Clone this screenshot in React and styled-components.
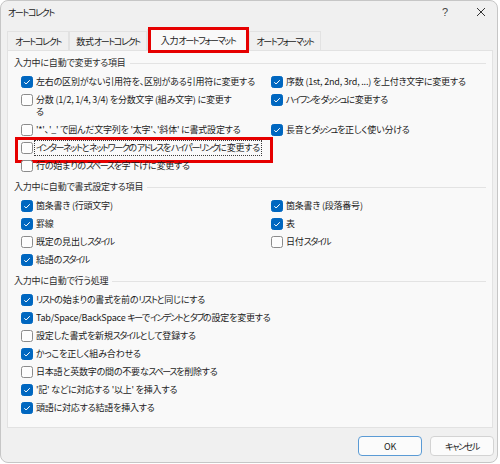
import React from "react";
import styled, { createGlobalStyle } from "styled-components";

const GlobalStyle = createGlobalStyle`
  * { box-sizing: border-box; }
  body {
    margin: 0;
    background: #ffffff;
    font-family: "Noto Sans CJK JP", sans-serif;
  }
`;

const Window = styled.div`
  width: 498px;
  height: 463px;
  border: 1px solid #c6c6c6;
  border-radius: 8px;
  background: #f0f0f0;
  display: flex;
  flex-direction: column;
  overflow: hidden;
  color: #1b1b1b;
  font-size: 9px;
  font-feature-settings: "palt";
  letter-spacing: -0.2px;
`;

// katakana in Yu Gothic UI is far narrower than in Noto, so tighten those runs
const Kana = styled.span`
  letter-spacing: -1.4px;
`;

const TitleBar = styled.div`
  height: 27px;
  padding: 0 11px 5px 7px;
  display: flex;
  align-items: center;
`;

const Title = styled.div`
  flex: 1;
`;

const Controls = styled.div`
  display: flex;
  align-items: center;
  gap: 28px;
  color: #444;
`;

const Help = styled.span`
  font-family: "Liberation Sans", sans-serif;
  font-size: 11px;
  letter-spacing: 0;
`;

const TabRow = styled.div`
  height: 22px;
  padding-left: 6px;
  display: flex;
  align-items: flex-end;
`;

const Tab = styled.div`
  position: relative;
  width: ${({ $w }) => $w}px;
  height: ${({ $active }) => ($active ? 22 : 19)}px;
  display: flex;
  align-items: center;
  justify-content: center;
  white-space: nowrap;
  background: ${({ $active }) => ($active ? "#f9f9f9" : "#f0f0f0")};
  border: 1px solid #e2e2e2;
  border-bottom: none;
  margin-bottom: ${({ $active }) => ($active ? -1 : 0)}px;
  z-index: ${({ $active }) => ($active ? 1 : 0)};

  ${({ $highlight }) =>
    $highlight &&
    `
    &::after {
      content: "";
      position: absolute;
      top: -3px;
      left: 0;
      right: -1px;
      bottom: -2px;
      border: 3px solid #e60000;
      pointer-events: none;
    }
  `}
`;

const Panel = styled.div`
  height: 378px;
  margin: 0 4px 0 6px;
  padding: 5px 6px 0 6px;
  border: 1px solid #e2e2e2;
  background: #f9f9f9;
`;

const Section = styled.div`
  & + & {
    margin-top: 5px;
  }
`;

const SectionHeader = styled.div`
  display: flex;
  align-items: center;
  white-space: nowrap;
  line-height: 14px;
  height: 14px;
  color: #2b2b2b;

  &::after {
    content: "";
    flex: 1;
    height: 1px;
    margin-left: 4px;
    background: #e3e3e3;
  }
`;

const Grid = styled.div`
  margin-top: 3px;
  padding-left: 7px;
  display: grid;
  grid-template-columns: ${({ $cols }) => ($cols === 2 ? "250px 1fr" : "1fr")};
`;

const Row = styled.div`
  position: relative;
  display: flex;
  align-items: flex-start;
  gap: 3px;
  padding: 3px 0;
  line-height: 12px;

  ${({ $highlight }) =>
    $highlight &&
    `
    &::before {
      content: "";
      position: absolute;
      top: -2px;
      left: -6px;
      width: 252px;
      height: 20px;
      border: 3px solid #e60000;
      pointer-events: none;
    }
  `}
`;

const Box = styled.span`
  flex: none;
  width: 12px;
  height: 12px;
  border-radius: 2.5px;
  display: flex;
  align-items: center;
  justify-content: center;
  background: ${({ $checked }) => ($checked ? "#0067c0" : "#fdfdfd")};
  border: 1px solid ${({ $checked }) => ($checked ? "#0067c0" : "#8b8b8b")};
`;

const Label = styled.span`
  white-space: nowrap;
  ${({ $focus }) =>
    $focus &&
    `
    outline: 1px dotted #3a3a3a;
    outline-offset: 1px;
  `}
`;

const Footer = styled.div`
  display: flex;
  justify-content: flex-end;
  gap: 8px;
  padding: 8px 3px 0 0;
`;

const Button = styled.button`
  width: 64px;
  height: 20px;
  padding: 0;
  font: inherit;
  letter-spacing: inherit;
  font-feature-settings: inherit;
  color: #1b1b1b;
  background: #fbfbfb;
  border: 1px solid ${({ $primary }) => ($primary ? "#5b9bd5" : "#d3d3d3")};
  border-radius: 4px;
`;

const Text = ({ children }) =>
  children
    .split(/([\u30A0-\u30FF]+)/)
    .map((part, i) => (i % 2 ? <Kana key={i}>{part}</Kana> : part));

const CloseIcon = () => (
  <svg width="10" height="10" viewBox="0 0 10 10">
    <path d="M1 1 L9 9 M9 1 L1 9" stroke="#333" strokeWidth="1" fill="none" />
  </svg>
);

const Check = ({ checked }) => (
  <Box $checked={checked}>
    {checked && (
      <svg width="8" height="8" viewBox="0 0 8 8">
        <path d="M1.3 4.2 L3.1 6 L6.8 2.2" stroke="#fff" strokeWidth="1" fill="none" />
      </svg>
    )}
  </Box>
);

const Option = ({ item }) => (
  <Row $highlight={item.highlight}>
    <Check checked={item.checked} />
    <Label $focus={item.highlight}>
      {item.text.split("\n").map((line, i) => (
        <React.Fragment key={i}>
          {i > 0 && <br />}
          <Text>{line}</Text>
        </React.Fragment>
      ))}
    </Label>
  </Row>
);

const tabs = [
  { name: "オートコレクト", w: 62 },
  { name: "数式オートコレクト", w: 78 },
  { name: "入力オートフォーマット", w: 102, active: true },
  { name: "オートフォーマット", w: 72 },
];

const sections = [
  {
    title: "入力中に自動で変更する項目",
    cols: 2,
    items: [
      { text: "左右の区別がない引用符を、区別がある引用符に変更する", checked: true },
      { text: "序数 (1st, 2nd, 3rd, ...) を上付き文字に変更する", checked: true },
      { text: "分数 (1/2, 1/4, 3/4) を分数文字 (組み文字) に変更す\nる" },
      { text: "ハイフンをダッシュに変更する", checked: true },
      { text: "'*'、'_' で囲んだ文字列を '太字'、'斜体' に書式設定する" },
      { text: "長音とダッシュを正しく使い分ける", checked: true },
      { text: "インターネットとネットワークのアドレスをハイパーリンクに変更する", highlight: true },
      null,
      { text: "行の始まりのスペースを字下げに変更する" },
    ],
  },
  {
    title: "入力中に自動で書式設定する項目",
    cols: 2,
    items: [
      { text: "箇条書き (行頭文字)", checked: true },
      { text: "箇条書き (段落番号)", checked: true },
      { text: "罫線", checked: true },
      { text: "表", checked: true },
      { text: "既定の見出しスタイル" },
      { text: "日付スタイル" },
      { text: "結語のスタイル", checked: true },
    ],
  },
  {
    title: "入力中に自動で行う処理",
    cols: 1,
    items: [
      { text: "リストの始まりの書式を前のリストと同じにする", checked: true },
      { text: "Tab/Space/BackSpace キーでインデントとタブの設定を変更する", checked: true },
      { text: "設定した書式を新規スタイルとして登録する" },
      { text: "かっこを正しく組み合わせる", checked: true },
      { text: "日本語と英数字の間の不要なスペースを削除する" },
      { text: "'記' などに対応する '以上' を挿入する", checked: true },
      { text: "頭語に対応する結語を挿入する", checked: true },
    ],
  },
];

const App = () => {
  return (
    <>
      <GlobalStyle />
      <Window>
        <TitleBar>
          <Title>
            <Text>オートコレクト</Text>
          </Title>
          <Controls>
            <Help>?</Help>
            <CloseIcon />
          </Controls>
        </TitleBar>
        <TabRow>
          {tabs.map((tab) => (
            <Tab key={tab.name} $w={tab.w} $active={tab.active} $highlight={tab.active}>
              <Text>{tab.name}</Text>
            </Tab>
          ))}
        </TabRow>
        <Panel>
          {sections.map((section) => (
            <Section key={section.title}>
              <SectionHeader>
                <Text>{section.title}</Text>
              </SectionHeader>
              <Grid $cols={section.cols}>
                {section.items.map((item, i) =>
                  item ? <Option key={item.text} item={item} /> : <div key={i} />
                )}
              </Grid>
            </Section>
          ))}
        </Panel>
        <Footer>
          <Button $primary>OK</Button>
          <Button>
            <Text>キャンセル</Text>
          </Button>
        </Footer>
      </Window>
    </>
  );
};

export default App;
